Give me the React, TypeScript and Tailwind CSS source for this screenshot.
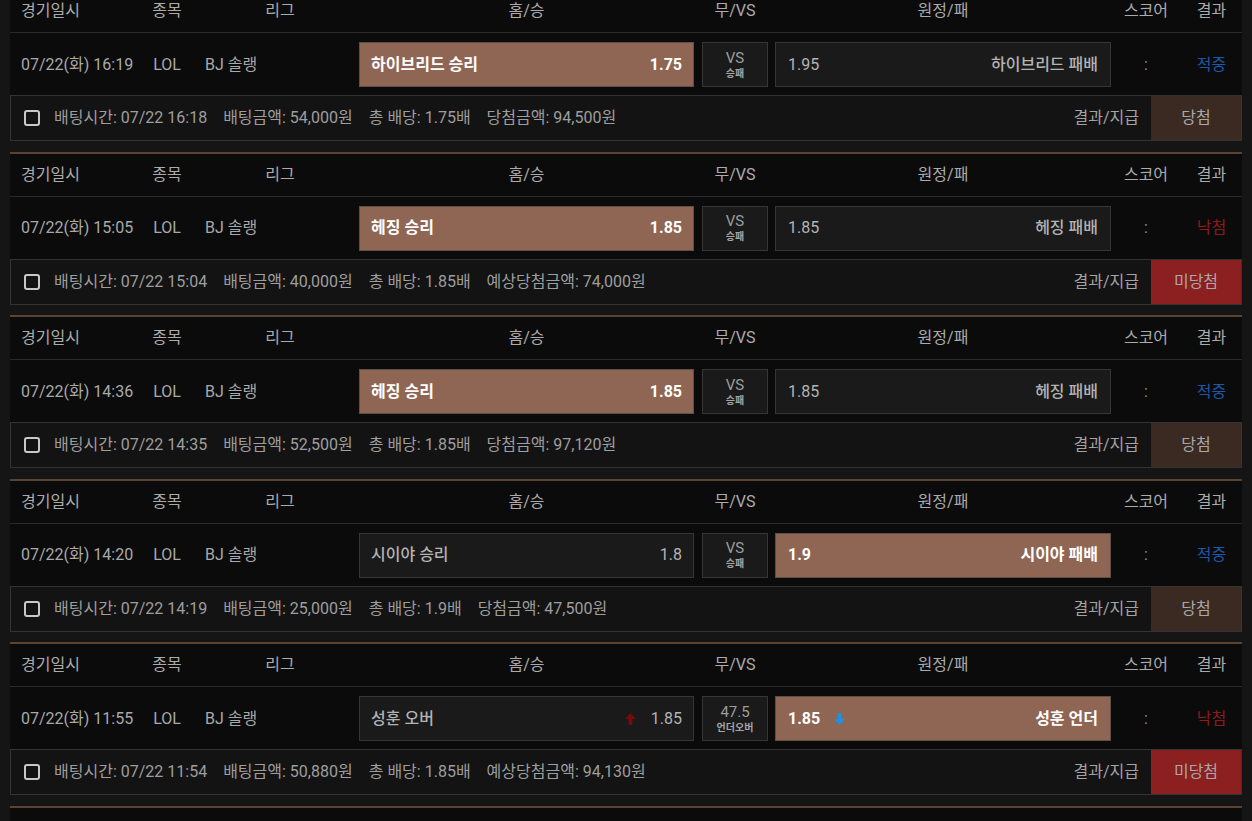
import React from 'react';

type Bet = {
  date: string;
  home: string;
  homeOdds: string;
  away: string;
  awayOdds: string;
  pick: 'home' | 'away';
  vsTop: string;
  vsBottom: string;
  overUnder?: boolean;
  result: 'hit' | 'miss';
  betTime: string;
  amount: string;
  total: string;
  winLabel: string;
  winAmount: string;
  won: boolean;
};

const bets: Bet[] = [
  {
    date: '07/22(화) 16:19', home: '하이브리드 승리', homeOdds: '1.75', away: '하이브리드 패배', awayOdds: '1.95',
    pick: 'home', vsTop: 'VS', vsBottom: '승패', result: 'hit', betTime: '07/22 16:18', amount: '54,000원',
    total: '1.75배', winLabel: '당첨금액', winAmount: '94,500원', won: true,
  },
  {
    date: '07/22(화) 15:05', home: '헤징 승리', homeOdds: '1.85', away: '헤징 패배', awayOdds: '1.85',
    pick: 'home', vsTop: 'VS', vsBottom: '승패', result: 'miss', betTime: '07/22 15:04', amount: '40,000원',
    total: '1.85배', winLabel: '예상당첨금액', winAmount: '74,000원', won: false,
  },
  {
    date: '07/22(화) 14:36', home: '헤징 승리', homeOdds: '1.85', away: '헤징 패배', awayOdds: '1.85',
    pick: 'home', vsTop: 'VS', vsBottom: '승패', result: 'hit', betTime: '07/22 14:35', amount: '52,500원',
    total: '1.85배', winLabel: '당첨금액', winAmount: '97,120원', won: true,
  },
  {
    date: '07/22(화) 14:20', home: '시이야 승리', homeOdds: '1.8', away: '시이야 패배', awayOdds: '1.9',
    pick: 'away', vsTop: 'VS', vsBottom: '승패', result: 'hit', betTime: '07/22 14:19', amount: '25,000원',
    total: '1.9배', winLabel: '당첨금액', winAmount: '47,500원', won: true,
  },
  {
    date: '07/22(화) 11:55', home: '성훈 오버', homeOdds: '1.85', away: '성훈 언더', awayOdds: '1.85',
    pick: 'away', vsTop: '47.5', vsBottom: '언더오버', overUnder: true, result: 'miss', betTime: '07/22 11:54',
    amount: '50,880원', total: '1.85배', winLabel: '예상당첨금액', winAmount: '94,130원', won: false,
  },
];

function ArrowUp() {
  return (
    <svg width="11" height="12" viewBox="0 0 11 12" className="mr-[15px]">
      <path d="M5.5 0 L11 6 L7.3 6 L7.3 12 L3.7 12 L3.7 6 L0 6 Z" fill="#7a0a0a" />
    </svg>
  );
}

function ArrowDown() {
  return (
    <svg width="11" height="12" viewBox="0 0 11 12" className="ml-[14px]">
      <path d="M5.5 12 L11 6 L7.3 6 L7.3 0 L3.7 0 L3.7 6 L0 6 Z" fill="#1a92e6" />
    </svg>
  );
}

function Header() {
  return (
    <div className="flex h-[43px] items-center border-b border-[#2a2a2a] bg-[#0b0b0b] text-[16px] text-[#ababab]">
      <div className="w-[131px] pl-[11px]">경기일시</div>
      <div className="w-[52px] text-center">종목</div>
      <div className="w-[166px] pl-[8px] text-center">리그</div>
      <div className="w-[335px] text-center">홈/승</div>
      <div className="ml-[8px] w-[66px] text-center">무/VS</div>
      <div className="ml-[7px] w-[336px] text-center">원정/패</div>
      <div className="w-[70px] text-center">스코어</div>
      <div className="w-[61px] text-center">결과</div>
    </div>
  );
}

function Block({ b }: { b: Bet }) {
  const homeSel = b.pick === 'home';
  const awaySel = b.pick === 'away';
  const sel = 'bg-[#8f6653] border-[#5c5048] text-white font-bold';
  const unsel = 'bg-[#1a1a1a] border-[#363636] text-[#b3b3b3] font-medium';
  return (
    <div className="mb-[10.5px]">
      <div className="h-[2px] bg-[#5b4333]" />
      <Header />
      <div className="flex h-[62px] items-center bg-[#0b0b0b] pt-px text-[16px] text-[#a9a9a9]">
        <div className="w-[131px] pl-[11px]">{b.date}</div>
        <div className="w-[52px] text-center">LOL</div>
        <div className="w-[166px] pl-[12px]">BJ 솔랭</div>
        <div className={`flex h-[45px] w-[335px] items-center border px-[11px] ${homeSel ? sel : unsel}`}>
          <span className="flex-1">{b.home}</span>
          {b.overUnder && <ArrowUp />}
          <span className={homeSel ? '' : 'font-normal'}>{b.homeOdds}</span>
        </div>
        <div className="ml-[8px] flex h-[45px] w-[66px] flex-col items-center justify-center border border-[#363636] bg-[#1a1a1a] leading-none text-[#9d9d9d]">
          <span className="text-[15px]">{b.vsTop}</span>
          <span className="mt-[3px] text-[10px] font-bold text-[#a5a5a5]">{b.vsBottom}</span>
        </div>
        <div className={`ml-[7px] flex h-[45px] w-[336px] items-center border px-[12px] ${awaySel ? sel : unsel}`}>
          <span className={awaySel ? '' : 'font-normal'}>{b.awayOdds}</span>
          {b.overUnder && <ArrowDown />}
          <span className="flex-1 text-right">{b.away}</span>
        </div>
        <div className="w-[70px] text-center text-[#8a8a8a]">:</div>
        <div className={`w-[61px] text-center ${b.result === 'hit' ? 'text-[#1d58a8]' : 'text-[#8c1b1b]'}`}>
          {b.result === 'hit' ? '적중' : '낙첨'}
        </div>
      </div>
      <div className="flex h-[46px] items-stretch border border-[#333333] bg-[#131313] text-[16px] text-[#9e9e9e]">
        <div className="flex flex-1 items-center gap-[14px] pl-[13px]">
          <span className="h-[16px] w-[16px] rounded-[3px] border-2 border-[#c8c8c8]" />
          <div className="flex items-center gap-[16px]">
            <span>배팅시간: {b.betTime}</span>
            <span>배팅금액: {b.amount}</span>
            <span>총 배당: {b.total}</span>
            <span>{b.winLabel}: {b.winAmount}</span>
          </div>
        </div>
        <div className="flex items-center pr-[12px] text-[#a3a3a3]">결과/지급</div>
        <div className={`flex w-[90px] items-center justify-center text-[#a8a8a8] ${b.won ? 'bg-[#3a2a22]' : 'bg-[#8c2020]'}`}>
          {b.won ? '당첨' : '미당첨'}
        </div>
      </div>
    </div>
  );
}

export default function App() {
  return (
    <div className="h-[821px] overflow-hidden bg-[#151515] px-[10px] font-['Roboto','Noto_Sans_CJK_KR',sans-serif]">
      <div className="-mt-[12px]">
        {bets.map((b, i) => (
          <Block key={i} b={b} />
        ))}
        <div className="h-[2px] bg-[#5b4333]" />
        <div className="h-[43px] bg-[#0b0b0b]" />
      </div>
    </div>
  );
}
